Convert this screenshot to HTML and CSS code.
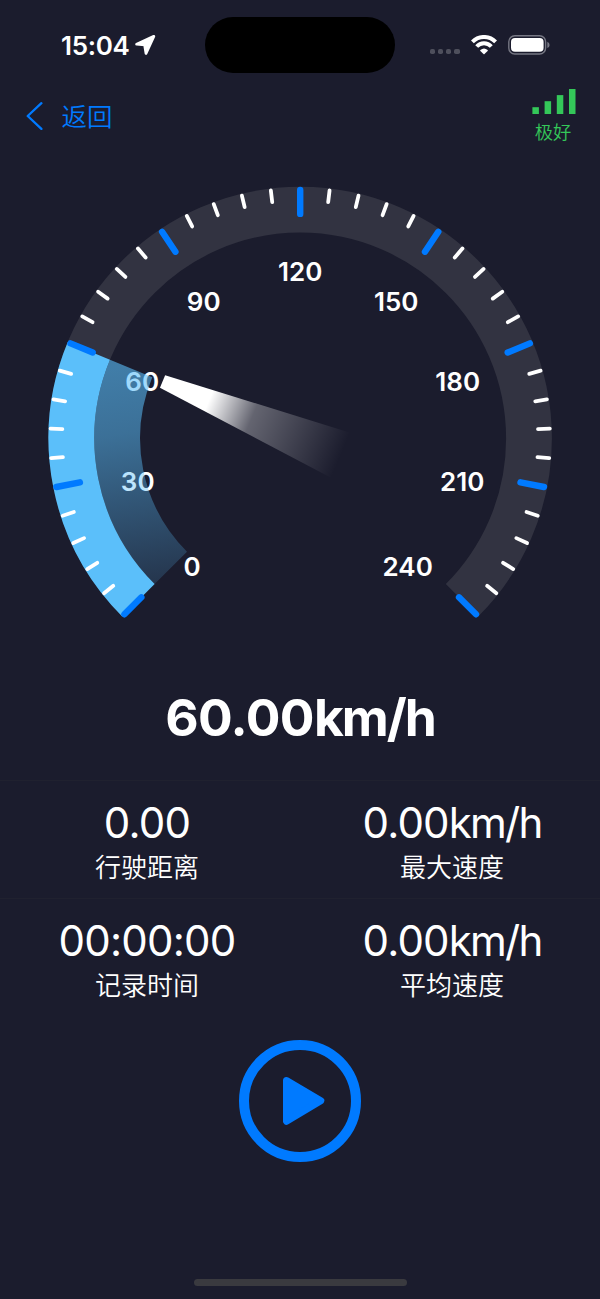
FILE: index.html
```html
<!DOCTYPE html>
<html lang="zh-CN">
<head>
    <meta charset="UTF-8">
    <meta name="viewport" content="width=device-width, initial-scale=1.0">
    <title>60.00km/h</title>
    <link rel="stylesheet" href="styles.css">
</head>
<body>
    <div class="status-bar">
        <div class="status-time">
            <span>15:04</span>
            <svg class="location-icon" width="21" height="20" viewBox="0 0 21 20">
                <path d="M1.6 9.2 L18.8 1.4 L11 18.4 L9.6 9.8 Z"/>
            </svg>
        </div>
        <div class="island"></div>
        <div class="status-icons">
            <div class="dots"><i></i><i></i><i></i><i></i></div>
            <svg class="wifi-icon" width="26" height="20" viewBox="0 0 26 20">
                <path class="wave" d="M1.4 6.9 A16.1 16.1 0 0 1 24.6 6.9"/>
                <path class="wave" d="M5.7 11.5 A10 10 0 0 1 20.3 11.5"/>
                <path d="M9.4 14.9 Q13 11.9 16.6 14.9 Q17.1 15.4 16.6 15.9 L13.5 19 Q13 19.4 12.5 19 L9.4 15.9 Q8.9 15.4 9.4 14.9 Z"/>
            </svg>
            <svg class="battery-icon" width="42" height="20" viewBox="0 0 42 20">
                <rect class="shell" x=".8" y=".8" width="36.8" height="18.2" rx="6"/>
                <rect x="3" y="3" width="32.6" height="13.8" rx="4"/>
                <path class="nub" d="M39.3 6.8 Q41.6 7.6 41.6 9.9 Q41.6 12.2 39.3 13 Z"/>
            </svg>
        </div>
    </div>

    <div class="nav-bar">
        <a class="back" href="#">
            <svg width="18" height="30" viewBox="0 0 18 30">
                <path d="M16.4 2.2 L2.7 15 L16.4 27.9"/>
            </svg>
            <span>返回</span>
        </a>
        <div class="signal">
            <svg class="bars" width="44" height="25" viewBox="0 0 44 25">
                <rect x=".4" y="18.2" width="6.5" height="6.8"/>
                <rect x="12.6" y="12.2" width="6.5" height="12.8"/>
                <rect x="24.8" y="6.1" width="6.5" height="18.9"/>
                <rect x="37" y="0" width="6.5" height="25"/>
            </svg>
            <span>极好</span>
        </div>
    </div>

    <svg class="gauge" width="600" height="480" viewBox="-300.2 -268.5 600 480">
        <defs>
            <linearGradient id="glow" gradientUnits="userSpaceOnUse" x1="-130" y1="-80" x2="-95" y2="140">
                <stop offset="0" stop-color="#5abefa" stop-opacity=".6"/>
                <stop offset=".3" stop-color="#5abefa" stop-opacity=".52"/>
                <stop offset="1" stop-color="#5abefa" stop-opacity=".15"/>
            </linearGradient>
            <linearGradient id="needle" gradientUnits="userSpaceOnUse" x1="0" y1="-149" x2="0" y2="44">
                <stop offset="0" stop-color="#fff"/>
                <stop offset=".26" stop-color="#fff"/>
                <stop offset=".5" stop-color="#fff" stop-opacity=".32"/>
                <stop offset="1" stop-color="#fff" stop-opacity="0"/>
            </linearGradient>
        </defs>
        <path class="track" id="track"/>
        <g class="numbers">
            <text x="-108" y="137.5">0</text>
            <text x="-162.5" y="52.5">30</text>
            <text x="-158" y="-47.5">60</text>
            <text x="-96.5" y="-127.5">90</text>
            <text x="0" y="-158">120</text>
            <text x="96" y="-127.5">150</text>
            <text x="157.5" y="-47.5">180</text>
            <text x="162" y="52.5">210</text>
            <text x="107.5" y="137.5">240</text>
        </g>
        <path class="progress" id="progress"/>
        <path class="progress-glow" id="progressGlow"/>
        <g id="ticks"></g>
        <path class="needle" id="needleShape" d="M-6.8 -149 L6.8 -149 L24.5 44 L-24.5 44 Z"/>
    </svg>

    <div class="speed">60.00<span>km/h</span></div>

    <div class="stats">
        <div class="stats-row">
            <div class="stat">
                <div class="stat-value">0.00</div>
                <div class="stat-label">行驶距离</div>
            </div>
            <div class="stat">
                <div class="stat-value">0.00<span>km/h</span></div>
                <div class="stat-label">最大速度</div>
            </div>
        </div>
        <div class="stats-row">
            <div class="stat">
                <div class="stat-value">00:00:00</div>
                <div class="stat-label">记录时间</div>
            </div>
            <div class="stat">
                <div class="stat-value">0.00<span>km/h</span></div>
                <div class="stat-label">平均速度</div>
            </div>
        </div>
    </div>

    <button class="play" type="button" aria-label="开始">
        <svg width="44" height="50" viewBox="0 0 44 50">
            <path d="M4.5 4.5 L38.8 24.8 L4.5 45.2 Z"/>
        </svg>
    </button>

    <div class="home-indicator"></div>

    <script>
        const MAX_SPEED = 240;
        const SWEEP = 270;
        const START = -135;
        const speed = 60;

        // 0° is straight up, angles grow clockwise
        function point(angle, r) {
            const a = angle * Math.PI / 180;
            return (Math.sin(a) * r).toFixed(2) + ' ' + (-Math.cos(a) * r).toFixed(2);
        }

        function arc(from, to, r) {
            const large = to - from > 180 ? 1 : 0;
            return `M${point(from, r)} A${r} ${r} 0 ${large} 1 ${point(to, r)}`;
        }

        const current = START + speed / MAX_SPEED * SWEEP;

        document.getElementById('track').setAttribute('d', arc(START, START + SWEEP, 228.8));
        document.getElementById('progress').setAttribute('d', arc(START, current, 228.8));
        document.getElementById('progressGlow').setAttribute('d', arc(START, current, 183));
        document.getElementById('needleShape').setAttribute('transform', `rotate(${current})`);

        let ticks = '';
        for (let i = 0; i <= 40; i++) {
            const angle = START + i * SWEEP / 40;
            const major = i % 5 === 0;
            const inner = major ? 224.6 : 238;
            const outer = major ? 248.6 : 249.8;
            ticks += `<path class="${major ? 'tick-major' : 'tick'}" d="M${point(angle, inner)} L${point(angle, outer)}"/>`;
        }
        document.getElementById('ticks').innerHTML = ticks;
    </script>
</body>
</html>
```
FILE: styles.css
```css
* {
    margin: 0;
    padding: 0;
    box-sizing: border-box;
}

body {
    width: 600px;
    height: 1299px;
    overflow: hidden;
    display: flex;
    flex-direction: column;
    background: #1b1c2d;
    color: white;
    font-family: Inter, "Noto Sans CJK SC", sans-serif;
}

.status-bar {
    display: grid;
    grid-template-columns: 205px 190px 205px;
    height: 73px;
    padding-top: 17px;
}

.status-time {
    display: flex;
    align-items: center;
    padding-left: 61px;
    gap: 5.5px;
    font-size: 26px;
    font-weight: 600;
    letter-spacing: -0.3px;
}

.location-icon {
    fill: white;
    stroke: white;
    stroke-width: 2.8;
    stroke-linejoin: round;
}

.island {
    background: black;
    border-radius: 28px;
}

.status-icons {
    display: flex;
    align-items: center;
    padding-left: 35px;
}

.dots {
    display: flex;
    gap: 2.8px;
    margin-top: 13px;
}

.dots i {
    width: 5.3px;
    height: 5.3px;
    border-radius: 1.8px;
    background: #4e4f5c;
}

.wifi-icon {
    margin-left: 11px;
    fill: white;
}

.wifi-icon .wave {
    fill: none;
    stroke: white;
    stroke-width: 4;
}

.battery-icon {
    margin-left: 11px;
    fill: white;
}

.battery-icon .shell {
    fill: none;
    stroke: #767783;
    stroke-width: 1.4;
}

.battery-icon .nub {
    fill: #767783;
}

.nav-bar {
    display: flex;
    justify-content: space-between;
    height: 97px;
    padding: 16px 24px 0 25px;
}

.back {
    display: flex;
    align-items: center;
    align-self: flex-start;
    gap: 18.5px;
    height: 53px;
    color: #007aff;
    font-size: 25.5px;
    font-weight: 350;
    text-decoration: none;
}

.back span {
    margin-top: -2px;
}

.back path {
    fill: none;
    stroke: #007aff;
    stroke-width: 2.3;
    stroke-linecap: round;
    stroke-linejoin: round;
}

.signal {
    color: #34c759;
    font-size: 18.3px;
    font-weight: 350;
    text-align: center;
    line-height: 36px;
}

.signal span {
    margin-right: 2px;
}

.bars {
    display: block;
    fill: #34c759;
}

.gauge {
    display: block;
    flex: none;
}

.track,
.progress,
.progress-glow {
    fill: none;
    stroke-width: 45.8;
}

.track {
    stroke: #323341;
}

.progress {
    stroke: #5bbffa;
}

.progress-glow {
    stroke: url(#glow);
}

.numbers text {
    fill: white;
    font-size: 26px;
    font-weight: 600;
    text-anchor: middle;
}

.tick,
.tick-major {
    stroke: white;
    stroke-width: 3.8;
    stroke-linecap: round;
}

.tick-major {
    stroke: #007aff;
    stroke-width: 6.4;
}

.needle {
    fill: url(#needle);
}

.speed {
    height: 130px;
    padding-top: 35px;
    text-align: center;
    font-size: 51.5px;
    font-weight: 700;
    line-height: 64px;
    letter-spacing: -0.6px;
}

.speed span {
    letter-spacing: -2px;
}

.stats-row {
    display: grid;
    grid-template-columns: 294px 1fr;
    gap: 10px;
    height: 117.7px;
    padding-top: 17px;
    border-top: 1px solid #20212f;
    text-align: center;
}

.stat-value {
    font-size: 42px;
    font-weight: 400;
    line-height: 50px;
    letter-spacing: -0.8px;
}

.stat-value span {
    letter-spacing: -1.8px;
}

.stat-label {
    padding-top: 2px;
    font-size: 26px;
    font-weight: 350;
    line-height: 36px;
}

.play {
    display: flex;
    align-items: center;
    justify-content: center;
    flex: none;
    width: 122px;
    height: 122px;
    margin: 24.6px auto 0;
    padding-left: 8px;
    border: 10.5px solid #007aff;
    border-radius: 50%;
    background: none;
}

.play path {
    fill: #007aff;
    stroke: #007aff;
    stroke-width: 7;
    stroke-linejoin: round;
}

.home-indicator {
    width: 213px;
    height: 7.5px;
    margin: auto auto 13px;
    border-radius: 4px;
    background: #3a3a3f;
}
```
